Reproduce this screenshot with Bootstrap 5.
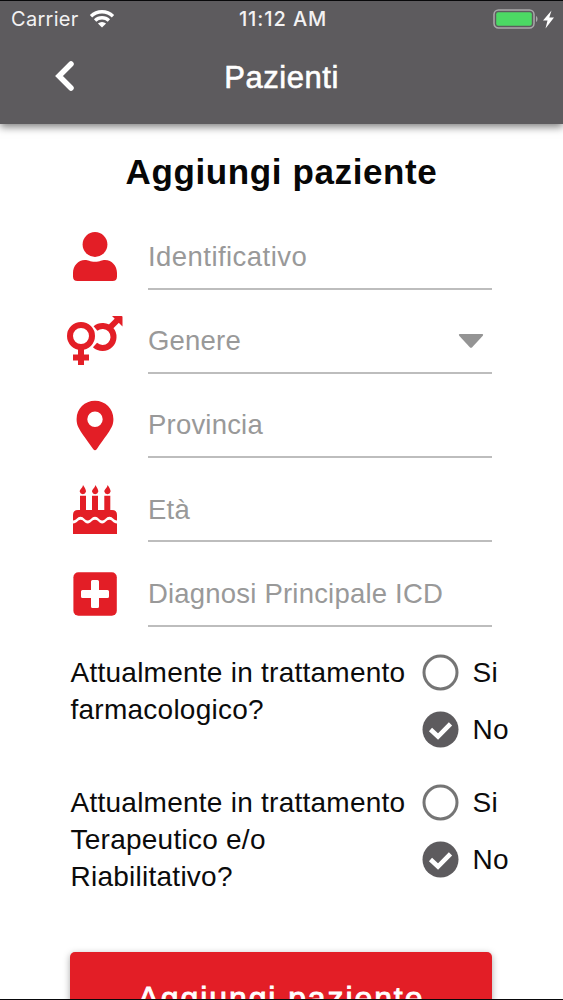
<!DOCTYPE html>
<html lang="it">
<head>
<meta charset="utf-8">
<meta name="viewport" content="width=device-width, initial-scale=1">
<title>Pazienti</title>
<link href="https://cdn.jsdelivr.net/npm/bootstrap@5.3.0/dist/css/bootstrap.min.css" rel="stylesheet">
<style>
  body { font-family: "Liberation Sans", Arial, sans-serif; font-size: 28px; letter-spacing: .25px; color: #0b0b0b; }
  svg { display: block; flex: none; }
  .screen { height: 1000px; border-top: 1px solid #08080a; border-bottom: 1px solid #08080a; background: #fff; }
  .topbar { height: 123px; background: #5d5b5e; box-shadow: 0 3px 8px rgba(0,0,0,.5); }
  .status { height: 37px; padding: 0 8px 0 11px; font-family: Inter, sans-serif; font-size: 20px; line-height: 37px; letter-spacing: .3px; color: #f3f2f3; }
  .status > div { flex: 1 1 0; }
  .wifi { margin: -2px 0 0 10px; }
  .battery { margin-top: -2px; }
  .clock { font-weight: 500; letter-spacing: .9px; }
  .titlebar { height: 80px; padding: 0 53px; font-size: 31px; letter-spacing: .55px; -webkit-text-stroke: .6px #fff; }
  .back { margin-top: -4px; }
  .screen-title { font-size: 35px; font-weight: 700; letter-spacing: .62px; line-height: 40px; margin: 28px 0 0; color: #070707; }
  .form-area { padding: 33px 71px 0 66px; }
  .field-row { height: 84.3px; }
  .field-icon { width: 58px; height: 64px; margin-right: 24px; color: #e31e26; fill: currentColor; }
  .field-line { height: 64.5px; border-bottom: 2px solid #bdbdbd; color: #999; font-size: 27.5px; letter-spacing: .2px; }
  .field-line.wide-text { letter-spacing: .45px; }
  .caret { margin-right: 7px; }
  .question { padding-left: 70.5px; line-height: 37px; margin-top: 36.5px; }
  .question.first { margin-top: 8px; }
  .question-text { width: 351px; }
  .choice { height: 37px; gap: 14px; }
  .choices { gap: 19.5px; }
  .submit { height: 100px; margin: 57px 71px 0 70px; border-radius: 5px; background: #e31e26; box-shadow: 0 2px 7px rgba(0,0,0,.35); font-size: 32px; letter-spacing: 1.9px; line-height: 36px; padding-top: 28px; -webkit-text-stroke: .9px #fff; }
</style>
</head>
<body>
<div class="screen d-flex flex-column overflow-hidden">
  <header class="topbar text-white flex-shrink-0">
    <div class="status d-flex align-items-center">
      <div class="d-flex align-items-center"><span>Carrier</span>
        <svg class="wifi" width="26" height="20" viewBox="0 0 26 20" fill="none" stroke="#fff" stroke-width="3.4"><path d="M2 7.2a16 16 0 0 1 22 0M6.1 11.5a10 10 0 0 1 13.8 0"/><path d="M13 18.6 8.9 14.5a6 6 0 0 1 8.2 0z" fill="#fff" stroke="none"/></svg>
      </div>
      <span class="clock">11:12 AM</span>
      <div class="d-flex align-items-center justify-content-end">
        <svg class="battery" width="62" height="22" viewBox="0 0 62 22"><rect x="1" y="2" width="40" height="18" rx="4.5" fill="none" stroke="#aaa9ab" stroke-width="1.5"/><rect x="3.2" y="4.2" width="35.6" height="13.6" rx="2" fill="#4cd964"/><path d="M43 8c2 1 2 5 0 6z" fill="#aaa9ab"/><path d="m58.500 2.500-8.500 10h4.500l-2 8 8.500-11h-4.700z" fill="#fff"/></svg>
      </div>
    </div>
    <div class="titlebar d-flex align-items-center">
      <svg class="back" width="24" height="34" viewBox="0 0 24 34" fill="none" stroke="#fff" stroke-width="5.5" stroke-linecap="round" stroke-linejoin="miter"><path d="M18 5 6 17l12 12"/></svg>
      <span class="flex-fill text-center me-4">Pazienti</span>
    </div>
  </header>

  <h1 class="screen-title text-center">Aggiungi paziente</h1>

  <main class="form-area">
    <div class="field-row d-flex">
      <svg class="field-icon" viewBox="0 0 58 64"><circle cx="29" cy="19.500" r="12.400"/><path d="M19 35c3 0 5 1.700 10 1.700S36 35 39 35c7 0 12 6 12 13v3.500q0 4.500-4.500 4.500h-35Q7 56 7 51.500V48c0-7 5-13 12-13z"/></svg>
      <div class="field-line wide-text flex-fill d-flex align-items-center">Identificativo</div>
    </div>
    <div class="field-row d-flex">
      <svg class="field-icon" viewBox="0 0 58 64"><g fill="none" stroke="currentColor" stroke-width="6"><circle cx="15" cy="27" r="11"/><path d="M15 39v17M7 48.500h16"/><path d="M29.500 19.500a11 11 0 1 1-.5 16.500M43.500 19l8-8"/></g><path d="M46 7h9.500q1 0 1 1v9.500z"/></svg>
      <div class="field-line flex-fill d-flex align-items-center justify-content-between">Genere
        <svg class="caret" width="28" height="18" viewBox="0 0 28 18" fill="#949494"><path d="M2.500 2h23q1.200.6.300 1.700L15.200 15.200q-1.200 1.200-2.400 0L2.200 3.700Q1.300 2.600 2.500 2z"/></svg></div>
    </div>
    <div class="field-row d-flex">
      <svg class="field-icon" viewBox="0 0 58 64"><path fill-rule="evenodd" d="M29 6.800c10.300 0 18.400 8 18.400 18.300 0 8-3 11-16.500 29.800q-1.900 2.500-3.800 0C13.600 36.100 10.600 33.100 10.600 25.100 10.600 14.800 18.700 6.800 29 6.800zm0 10.700a7.700 7.700 0 1 0 0 15.400 7.700 7.700 0 0 0 0-15.400z"/></svg>
      <div class="field-line flex-fill d-flex align-items-center">Provincia</div>
    </div>
    <div class="field-row d-flex">
      <svg class="field-icon" viewBox="0 0 58 64"><path d="M17 7c2 3 3 4.700 3 6.500a3.200 3.200 0 0 1-6.300 0c0-2.300 3-3.500 3.300-6.500zM29.300 7c2 3 3 4.700 3 6.500a3.200 3.200 0 0 1-6.300 0c0-2.300 3-3.500 3.300-6.500zM41.600 7c2 3 3 4.700 3 6.500a3.200 3.200 0 0 1-6.300 0c0-2.300 3-3.500 3.300-6.500z"/><path d="M14 17.800h6V32h6V17.800h6V32h6.300V17.800h6V32H46q5 0 5 5v5.500c-3.700 0-4-3.700-7.500-3.700-3.700 0-3.700 3.700-7.300 3.700S32.600 38.800 29 38.800s-3.700 3.700-7.300 3.700-3.600-3.700-7.200-3.700S11 42.500 7 42.500V37q0-5 5-5h2z"/><path d="M7 45.500c4.400 0 4.600-3.700 7.500-3.700 3.600 0 3.600 3.700 7.200 3.700s3.700-3.700 7.300-3.700 3.600 3.700 7.200 3.700 3.600-3.700 7.300-3.700c3 0 3.200 3.700 7.500 3.700V56H7z"/></svg>
      <div class="field-line flex-fill d-flex align-items-center">Età</div>
    </div>
    <div class="field-row d-flex">
      <svg class="field-icon" viewBox="0 0 58 64"><rect x="7.400" y="10.300" width="43.400" height="43.400" rx="5"/><path fill="#fff" d="M26.500 18h5q1.500 0 1.500 1.500V28h8.500q1.500 0 1.500 1.500v5q0 1.500-1.500 1.500H33v8.500q0 1.500-1.500 1.500h-5q-1.500 0-1.500-1.500V36h-8.500q-1.500 0-1.500-1.500v-5q0-1.500 1.500-1.500H25v-8.500q0-1.500 1.500-1.500z"/></svg>
      <div class="field-line flex-fill d-flex align-items-center">Diagnosi Principale ICD</div>
    </div>
  </main>

  <section class="question first d-flex">
    <div class="question-text">Attualmente in trattamento farmacologico?</div>
    <div class="choices d-flex flex-column">
      <div class="choice d-flex align-items-center"><svg width="37" height="37" viewBox="0 0 37 37"><circle cx="18.500" cy="18.500" r="16.500" fill="#fff" stroke="#757575" stroke-width="3"/></svg>Si</div>
      <div class="choice d-flex align-items-center"><svg width="37" height="37" viewBox="0 0 37 37"><circle cx="18.500" cy="18.500" r="18" fill="#5d5b5e"/><path d="m8.500 18.500 7.500 7 12.500-12.700" fill="none" stroke="#fff" stroke-width="4.600"/></svg>No</div>
    </div>
  </section>
  <section class="question d-flex">
    <div class="question-text">Attualmente in trattamento Terapeutico e/o Riabilitativo?</div>
    <div class="choices d-flex flex-column">
      <div class="choice d-flex align-items-center"><svg width="37" height="37" viewBox="0 0 37 37"><circle cx="18.500" cy="18.500" r="16.500" fill="#fff" stroke="#757575" stroke-width="3"/></svg>Si</div>
      <div class="choice d-flex align-items-center"><svg width="37" height="37" viewBox="0 0 37 37"><circle cx="18.500" cy="18.500" r="18" fill="#5d5b5e"/><path d="m8.500 18.500 7.500 7 12.500-12.700" fill="none" stroke="#fff" stroke-width="4.600"/></svg>No</div>
    </div>
  </section>

  <div class="submit text-white text-center flex-shrink-0">Aggiungi paziente</div>
</div>
<script src="https://cdn.jsdelivr.net/npm/bootstrap@5.3.0/dist/js/bootstrap.bundle.min.js"></script>
</body>
</html>
